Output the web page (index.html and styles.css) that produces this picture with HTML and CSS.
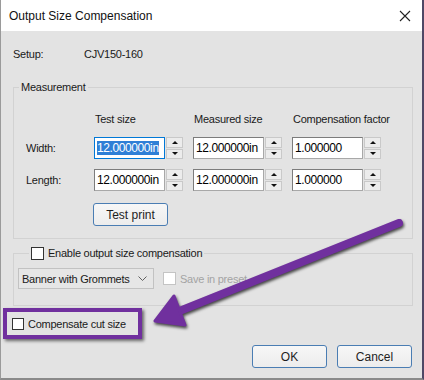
FILE: index.html
```html
<!DOCTYPE html>
<html lang="en">
<head>
<meta charset="UTF-8">
<title>Output Size Compensation</title>
<link rel="stylesheet" href="styles.css">
</head>
<body>

<div class="window">
    <div class="titlebar">
        <span class="title">Output Size Compensation</span>
        <svg class="close" width="12" height="12" viewBox="0 0 12 12">
            <path d="M1 1 L11 11 M11 1 L1 11" stroke="#222" stroke-width="1.1" fill="none"/>
        </svg>
    </div>

    <div class="body">
        <div class="setup">
            <span class="setup-label">Setup:</span>
            <span>CJV150-160</span>
        </div>

        <fieldset class="group measure">
            <legend>Measurement</legend>
            <div class="grid">
                <span></span>
                <span class="head">Test size</span>
                <span class="head">Measured size</span>
                <span class="head">Compensation factor</span>

                <span class="row-label">Width:</span>
                <div class="spin">
                    <div class="field focused"><span class="sel">12.000000in</span></div>
                    <div class="spinner"><span class="up"></span><span class="down"></span></div>
                </div>
                <div class="spin">
                    <div class="field">12.000000in</div>
                    <div class="spinner"><span class="up"></span><span class="down"></span></div>
                </div>
                <div class="spin">
                    <div class="field">1.000000</div>
                    <div class="spinner"><span class="up"></span><span class="down"></span></div>
                </div>

                <span class="row-label">Length:</span>
                <div class="spin">
                    <div class="field">12.000000in</div>
                    <div class="spinner"><span class="up"></span><span class="down"></span></div>
                </div>
                <div class="spin">
                    <div class="field">12.000000in</div>
                    <div class="spinner"><span class="up"></span><span class="down"></span></div>
                </div>
                <div class="spin">
                    <div class="field">1.000000</div>
                    <div class="spinner"><span class="up"></span><span class="down"></span></div>
                </div>

                <span></span>
                <button class="btn test-print">Test print</button>
            </div>
        </fieldset>

        <fieldset class="group enable">
            <legend><span class="check"></span>Enable output size compensation</legend>
            <div class="preset-row">
                <div class="combo">
                    <span>Banner with Grommets</span>
                    <svg width="9" height="5" viewBox="0 0 9 5"><path d="M0.5 0.5 L4.5 4.5 L8.5 0.5" stroke="#606060" fill="none"/></svg>
                </div>
                <span class="check disabled"></span>
                <span class="muted">Save in preset</span>
            </div>
        </fieldset>

        <div class="highlight">
            <span class="check"></span>Compensate cut size
        </div>

        <div class="actions">
            <button class="btn">OK</button>
            <button class="btn">Cancel</button>
        </div>
    </div>

    <!-- annotation arrow drawn over the dialog -->
    <svg class="arrow" width="424" height="380" viewBox="0 0 424 380">
        <line x1="399" y1="223" x2="172" y2="314" stroke="#70309e" stroke-width="8" stroke-linecap="round"/>
        <polygon points="155,321 174,296 185,325" fill="#70309e" stroke="#70309e" stroke-width="3" stroke-linejoin="round"/>
    </svg>
</div>

</body>
</html>
```

FILE: styles.css
```css
body {
    margin: 0;
    padding: 0;
    font-family: "Liberation Sans", Arial, sans-serif;
    background-color: #e3e3e3;
}

.window {
    position: relative;
    width: 424px;
    height: 380px;
    box-sizing: border-box;
    border-left: 1px solid #9a9a9a;
    border-bottom: 2px solid #8a8a8a;
    border-right: 2px solid #4f4866;
    background-color: #e3e3e3;
    overflow: hidden;
}

.titlebar {
    height: 31px;
    background-color: #fff;
    display: flex;
    align-items: center;
    justify-content: space-between;
    padding: 0 11px 0 8px;
}

.title {
    font-size: 12px;
    color: #111;
}

.body {
    padding: 16px 10px 0 12px;
    font-size: 11px;
    letter-spacing: -0.25px;
    color: #1a1a1a;
}

.setup {
    display: flex;
    line-height: 14px;
}

.setup-label {
    width: 71px;
}

.group {
    margin: 0;
    padding: 0;
    width: 400px;
    box-sizing: border-box;
    border: 1px solid #d2d2d2;
}

.group legend {
    padding: 0 2px;
    line-height: 14px;
}

.measure {
    margin-top: 19px;
    padding-top: 18px;
    padding-bottom: 12px;
}

.measure legend {
    margin-left: 5px;
}

.grid {
    display: grid;
    grid-template-columns: 80px 99px 99px 1fr;
    grid-template-rows: 15px 22px 22px 25px;
    row-gap: 10px;
}

.head {
    line-height: 14px;
    padding-left: 1px;
}

.row-label {
    padding-left: 12px;
    align-self: center;
}

.spin {
    display: flex;
}

.field {
    width: 71px;
    height: 22px;
    box-sizing: border-box;
    background-color: #fff;
    border: 1px solid #a8a8a8;
    border-top-color: #7c7c7c;
    border-left-color: #7c7c7c;
    font-size: 12px;
    letter-spacing: -0.4px;
    line-height: 20px;
    padding-left: 2px;
    color: #000;
    white-space: nowrap;
    overflow: hidden;
}

.field.focused {
    border-color: #0078d7;
}

.sel {
    background-color: #2f7fd6;
    color: #fff;
}

.spinner {
    margin-left: 1px;
    width: 17px;
    display: flex;
    flex-direction: column;
    gap: 1px;
}

.spinner span {
    flex: 1;
    box-sizing: border-box;
    border: 1px solid #c9c9c9;
    background-color: #ececec;
    display: flex;
    align-items: center;
    justify-content: center;
}

.spinner .up::after,
.spinner .down::after {
    content: "";
    border-left: 3px solid transparent;
    border-right: 3px solid transparent;
}

.spinner .up::after {
    border-bottom: 3px solid #111;
}

.spinner .down::after {
    border-top: 3px solid #111;
}

.btn {
    height: 23px;
    width: 75px;
    box-sizing: border-box;
    border: 1px solid #4a7db3;
    border-radius: 3px;
    background: linear-gradient(#f7f7f7, #ececec);
    font-family: "Liberation Sans", Arial, sans-serif;
    font-size: 12px;
    color: #1e1e1e;
    padding: 0;
}

.test-print {
    align-self: end;
    margin-left: -1px;
}

.enable {
    margin-top: 7px;
    padding: 8px 0 16px 4px;
}

.enable legend {
    margin-left: 11px;
    display: flex;
    align-items: center;
}

.check {
    width: 13px;
    height: 13px;
    box-sizing: border-box;
    border: 1px solid #333;
    background-color: #fff;
    margin-right: 4px;
    flex-shrink: 0;
}

.check.disabled {
    border-color: #c4c4c4;
}

.preset-row {
    display: flex;
    align-items: center;
}

.combo {
    width: 136px;
    height: 21px;
    box-sizing: border-box;
    border: 1px solid #c2c2c2;
    background-color: #e6e6e6;
    display: flex;
    align-items: center;
    justify-content: space-between;
    padding: 0 6px 0 3px;
    margin-right: 9px;
}

.muted {
    color: #a3a3a3;
}

.highlight {
    margin: 2px 0 0 -10px;
    width: 139px;
    height: 31px;
    box-sizing: border-box;
    border: 4px solid #70309e;
    box-shadow: 2px 2px 3px rgba(0, 0, 0, 0.55);
    display: flex;
    align-items: center;
    padding-left: 5px;
}

.highlight .check {
    width: 12px;
    height: 12px;
}

.actions {
    margin-top: 6px;
    display: flex;
    justify-content: flex-end;
    gap: 10px;
}

.arrow {
    position: absolute;
    left: -1px;
    top: 0;
    pointer-events: none;
    filter: drop-shadow(1px 2px 1.5px rgba(0, 0, 0, 0.7));
}
```
